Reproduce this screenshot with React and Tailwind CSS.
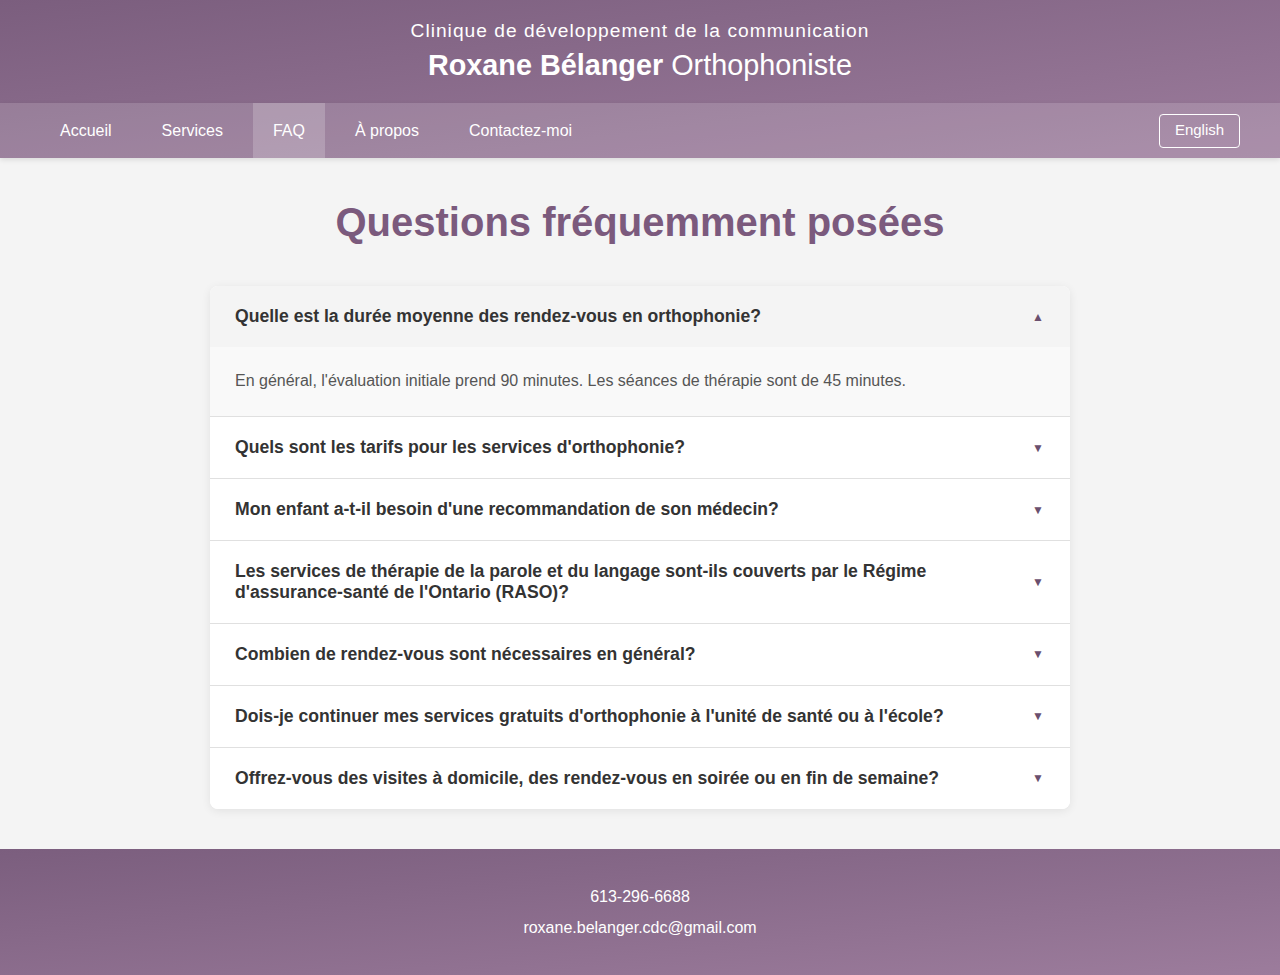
import React, { useState } from "react";

const faqs = [
  {
    q: "Quelle est la durée moyenne des rendez-vous en orthophonie?",
    a: "En général, l'évaluation initiale prend 90 minutes. Les séances de thérapie sont de 45 minutes.",
  },
  {
    q: "Quels sont les tarifs pour les services d'orthophonie?",
    a: "Veuillez me contacter pour connaître les tarifs en vigueur.",
  },
  {
    q: "Mon enfant a-t-il besoin d'une recommandation de son médecin?",
    a: "Non, aucune recommandation n'est nécessaire.",
  },
  {
    q: "Les services de thérapie de la parole et du langage sont-ils couverts par le Régime d'assurance-santé de l'Ontario (RASO)?",
    a: "Non, mais plusieurs assurances privées les couvrent.",
  },
  {
    q: "Combien de rendez-vous sont nécessaires en général?",
    a: "Cela dépend des besoins de chaque personne.",
  },
  {
    q: "Dois-je continuer mes services gratuits d'orthophonie à l'unité de santé ou à l'école?",
    a: "Oui, il est possible de combiner les services.",
  },
  {
    q: "Offrez-vous des visites à domicile, des rendez-vous en soirée ou en fin de semaine?",
    a: "Oui, selon les disponibilités.",
  },
];

const navItems = ["Accueil", "Services", "FAQ", "À propos", "Contactez-moi"];

export default function App() {
  const [open, setOpen] = useState(0);

  return (
    <div className="min-h-screen flex flex-col bg-[#f4f4f4] font-['Liberation_Sans',Arial,sans-serif]">
      {/* header */}
      <header className="bg-gradient-to-br from-[#7b5e7e] to-[#9c7c9c] text-white">
        <div className="pt-5 pb-[21px] text-center">
          <p className="text-[19.2px] leading-[22px] tracking-[1px]">
            Clinique de développement de la communication
          </p>
          <h1 className="mt-[6px] text-[28.8px] leading-[34px]">
            <span className="font-bold">Roxane Bélanger</span> Orthophoniste
          </h1>
        </div>
        <nav className="h-[55px] bg-white/15 flex items-center justify-between px-10 shadow-[0_2px_5px_rgba(0,0,0,0.1)]">
          <ul className="flex gap-[10px] h-full">
            {navItems.map((item) => (
              <li key={item} className="h-full">
                <a
                  href="#"
                  className={
                    "h-full flex items-center px-5 text-[16px] text-white " +
                    (item === "FAQ" ? "bg-white/20" : "")
                  }
                >
                  {item}
                </a>
              </li>
            ))}
          </ul>
          <button className="h-[34px] w-[81px] border border-white rounded-[4px] text-[15px] text-white">
            English
          </button>
        </nav>
      </header>

      {/* main */}
      <main className="flex-1 pt-10 pb-10">
        <h2 className="text-center text-[40px] leading-[48px] font-bold text-[#7b5a7d] mb-10">
          Questions fréquemment posées
        </h2>

        <div className="w-[860px] mx-auto bg-white rounded-lg shadow-[0_2px_10px_rgba(0,0,0,0.08)] overflow-hidden">
          {faqs.map((f, i) => (
            <div key={i} className={i < faqs.length - 1 ? "border-b border-[#e0e0e0]" : ""}>
              <button
                onClick={() => setOpen(open === i ? -1 : i)}
                className={
                  "w-full flex items-center justify-between text-left px-[25px] py-[20.25px] " +
                  (open === i ? "bg-[#f4f4f4]" : "bg-white")
                }
              >
                <span className="text-[17.6px] leading-[20.5px] font-bold text-[#333] pr-[60px]">
                  {f.q}
                </span>
                <span className="text-[12px] leading-[20px] text-[#6b4f6e] mr-[1px]">
                  {open === i ? "▲" : "▼"}
                </span>
              </button>
              {open === i && (
                <div className="bg-[#f9f9f9] px-[25px] pt-[24px] pb-[25px] text-[16px] leading-[20px] text-[#555]">
                  {f.a}
                </div>
              )}
            </div>
          ))}
        </div>
      </main>

      {/* footer */}
      <footer className="bg-gradient-to-br from-[#7b5e7e] to-[#9c7c9c] text-white text-center pt-9 pb-[35px]">
        <div className="flex flex-col gap-[7px] text-[16px] leading-6">
          <p>613-296-6688</p>
          <p>roxane.belanger.cdc@gmail.com</p>
        </div>
      </footer>
    </div>
  );
}
